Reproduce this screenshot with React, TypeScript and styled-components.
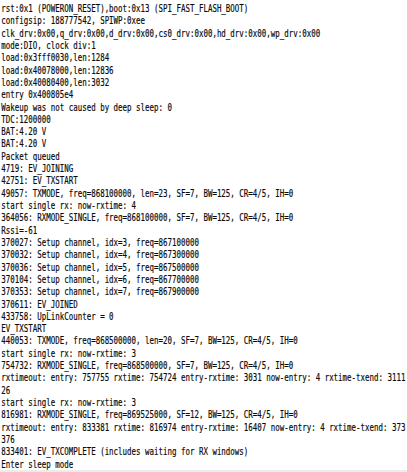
import React from "react";
import styled, { createGlobalStyle } from "styled-components";

const GlobalStyle = createGlobalStyle`
  html, body {
    margin: 0;
    padding: 0;
    background: #ffffff;
  }
  #root {
    width: 407px;
    height: 472px;
  }
`;

const Console = styled.div`
  width: 407px;
  height: 472px;
  box-sizing: border-box;
  background: #ffffff;
  border-bottom: 2px solid #ececec;
  overflow: hidden;
  display: flex;
  flex-direction: column;
`;

const Log = styled.div`
  width: 620px;
  padding: 3px 0 0 2px;
  transform: scaleX(0.678);
  transform-origin: 0 0;
  display: flex;
  flex-direction: column;
`;

const Line = styled.div`
  font-family: "DejaVu Sans Mono", "Liberation Mono", monospace;
  font-size: 11px;
  line-height: 12.32px;
  height: 12.32px;
  color: #0a0a0a;
  -webkit-text-stroke: 0.2px #0a0a0a;
  white-space: pre;
`;

const lines: string[] = [
  "rst:0x1 (POWERON_RESET),boot:0x13 (SPI_FAST_FLASH_BOOT)",
  "configsip: 188777542, SPIWP:0xee",
  "clk_drv:0x00,q_drv:0x00,d_drv:0x00,cs0_drv:0x00,hd_drv:0x00,wp_drv:0x00",
  "mode:DIO, clock div:1",
  "load:0x3fff0030,len:1284",
  "load:0x40078000,len:12836",
  "load:0x40080400,len:3032",
  "entry 0x400805e4",
  "Wakeup was not caused by deep sleep: 0",
  "TDC:1200000",
  "BAT:4.20 V",
  "BAT:4.20 V",
  "Packet queued",
  "4719: EV_JOINING",
  "42751: EV_TXSTART",
  "49057: TXMODE, freq=868100000, len=23, SF=7, BW=125, CR=4/5, IH=0",
  "start single rx: now-rxtime: 4",
  "364056: RXMODE_SINGLE, freq=868100000, SF=7, BW=125, CR=4/5, IH=0",
  "Rssi=-61",
  "370027: Setup channel, idx=3, freq=867100000",
  "370032: Setup channel, idx=4, freq=867300000",
  "370036: Setup channel, idx=5, freq=867500000",
  "370104: Setup channel, idx=6, freq=867700000",
  "370353: Setup channel, idx=7, freq=867900000",
  "370611: EV_JOINED",
  "433758: UpLinkCounter = 0",
  "EV_TXSTART",
  "440053: TXMODE, freq=868500000, len=20, SF=7, BW=125, CR=4/5, IH=0",
  "start single rx: now-rxtime: 3",
  "754732: RXMODE_SINGLE, freq=868500000, SF=7, BW=125, CR=4/5, IH=0",
  "rxtimeout: entry: 757755 rxtime: 754724 entry-rxtime: 3031 now-entry: 4 rxtime-txend: 3111",
  "26",
  "start single rx: now-rxtime: 3",
  "816981: RXMODE_SINGLE, freq=869525000, SF=12, BW=125, CR=4/5, IH=0",
  "rxtimeout: entry: 833381 rxtime: 816974 entry-rxtime: 16407 now-entry: 4 rxtime-txend: 373",
  "376",
  "833401: EV_TXCOMPLETE (includes waiting for RX windows)",
  "Enter sleep mode",
];

export default function App() {
  return (
    <>
      <GlobalStyle />
      <Console>
        <Log>
          {lines.map((text, i) => (
            <Line key={i}>{text}</Line>
          ))}
        </Log>
      </Console>
    </>
  );
}
